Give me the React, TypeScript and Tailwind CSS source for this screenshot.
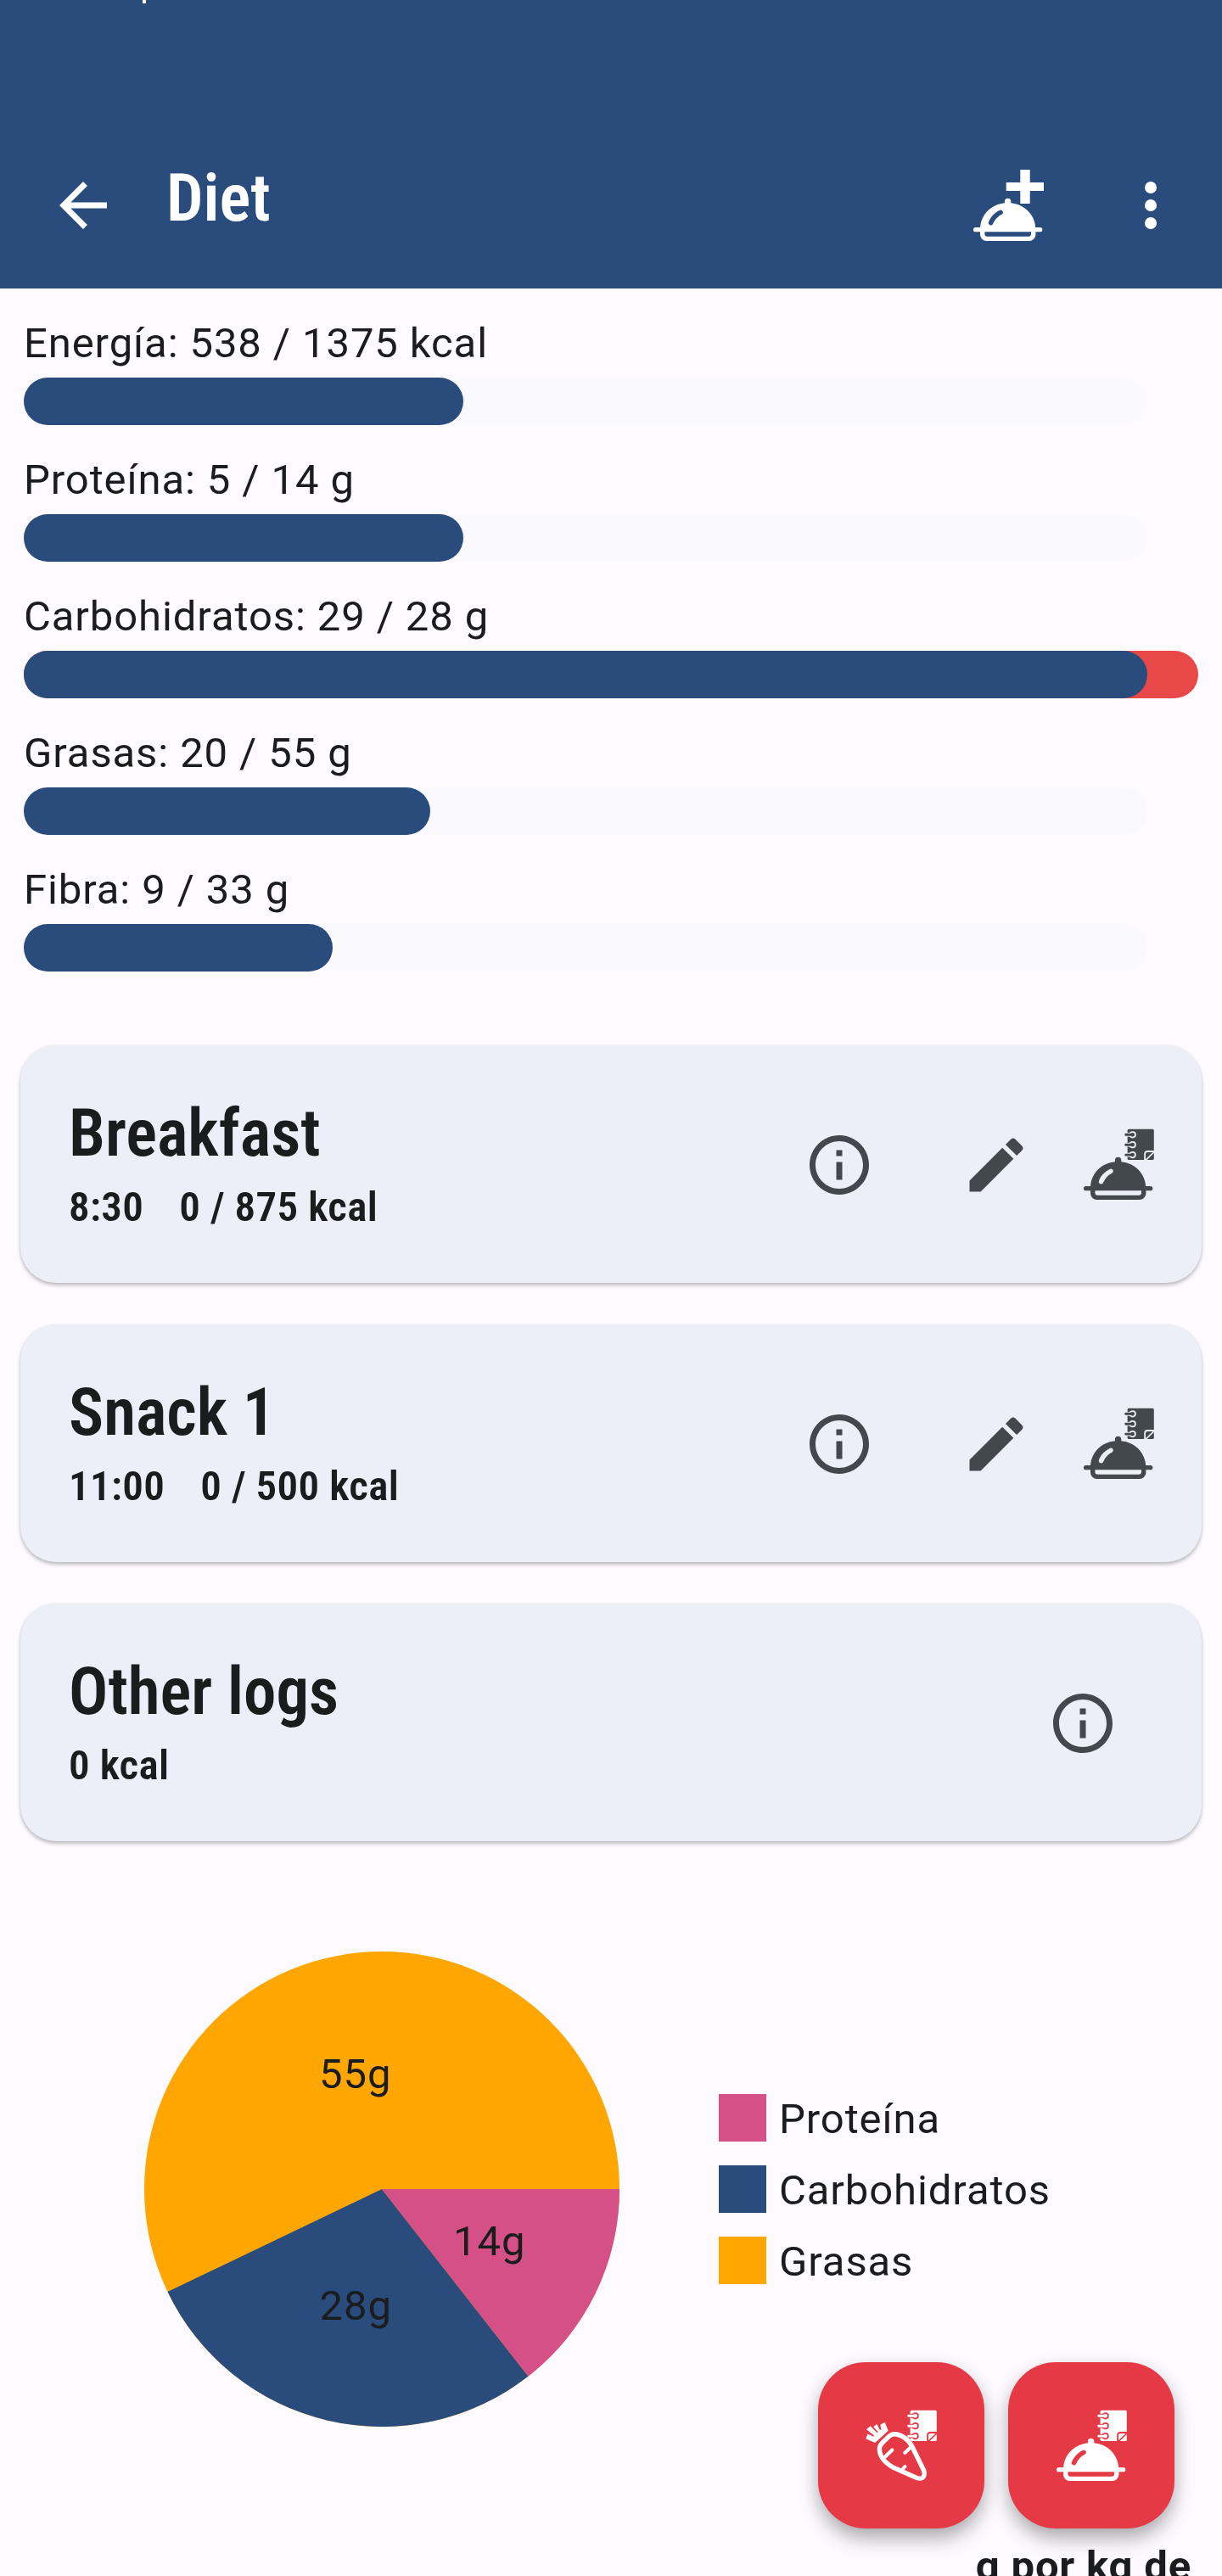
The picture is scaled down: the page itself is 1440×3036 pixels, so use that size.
import { useId } from 'react';

const bars = [
  { label: 'Energía: 538 / 1375 kcal', width: 518 },
  { label: 'Proteína: 5 / 14 g', width: 518 },
  { label: 'Carbohidratos: 29 / 28 g', width: 1324, over: true },
  { label: 'Grasas: 20 / 55 g', width: 479 },
  { label: 'Fibra: 9 / 33 g', width: 364 },
];

const legend = [
  { label: 'Proteína', color: 'bg-[#d45087]' },
  { label: 'Carbohidratos', color: 'bg-[#2a4c7d]' },
  { label: 'Grasas', color: 'bg-[#ffa600]' },
];

const CARROT =
  'M27.5 31.5Q31 28.5 34.5 28.7Q47.5 30 54.7 43L68.6 71.5Q70.3 77.5 67.5 80Q65 82 60.5 80.5L33 68.3Q16.4 59 16.4 46.5Q16.4 42.3 19.5 39.3Z';

function Dish() {
  return (
    <path
      fill="currentColor"
      fillRule="evenodd"
      d="M37.9 39.2V37.4A3.7 3.7 0 0 1 45.3 37.4V39.2C61.5 40.8 73.2 53 74.2 68H79.7A2.65 2.65 0 0 1 79.7 73.3H74.4V76.4A7.6 7.6 0 0 1 66.8 84H16.6A7.6 7.6 0 0 1 9 76.4V73.3H3.6A2.65 2.65 0 0 1 3.6 68H9.1C10 53 21.7 40.8 37.9 39.2ZM14.4 73.3V75.5A3.2 3.2 0 0 0 17.6 78.7H65.8A3.2 3.2 0 0 0 69 75.5V73.3ZM19 61.6A2.75 2.75 0 0 0 24.2 63.6C26.5 58.4 29.8 55.2 34.6 52.6A2.75 2.75 0 0 0 32.2 47.7C26.2 50.6 21.5 55 19 61.6Z"
    />
  );
}

function Notebook({ behindCarrot = false }: { behindCarrot?: boolean }) {
  const id = useId();
  const rings = [7.3, 19.2, 31.1];
  return (
    <g>
      <mask id={id} maskUnits="userSpaceOnUse" x="0" y="0" width="84" height="84">
        <rect width="84" height="84" fill="white" />
        {rings.map((y) => (
          <g key={y} fill="black">
            <rect x="48" y={y - 2.4} width="10" height="4.8" />
            <circle cx="58.7" cy={y} r="4.1" />
          </g>
        ))}
        <path d="M73.1 38V30.2Q73.1 27 76.3 27H84" fill="none" stroke="black" strokeWidth="1.8" />
        <path d="M74 37.4L83.6 28" stroke="black" strokeWidth="1.7" />
        {behindCarrot && <path d={CARROT} fill="black" stroke="black" strokeWidth="5.3" />}
      </mask>
      <rect x="52.6" y="0.8" width="31.2" height="36.2" rx="1.6" fill="currentColor" mask={`url(#${id})`} />
      {rings.map((y) => (
        <g key={y} fill="currentColor">
          <rect x="49.4" y={y - 1.45} width="9" height="2.9" rx="0.8" />
          <circle cx="58.6" cy={y} r="2.4" />
        </g>
      ))}
    </g>
  );
}

function DishLogIcon() {
  return (
    <svg viewBox="0 0 84 84" className="size-[84px] shrink-0">
      <Notebook />
      <Dish />
    </svg>
  );
}

function DishAddIcon() {
  return (
    <svg viewBox="0 0 84 84" className="size-[84px] shrink-0">
      <path fill="currentColor" d="M56.3 0H67.7V15H84V25H67.7V40H56.3V25H39.7V15H56.3Z" />
      <Dish />
    </svg>
  );
}

function CarrotLogIcon() {
  return (
    <svg viewBox="0 0 84 84" className="size-[84px] shrink-0">
      <Notebook behindCarrot />
      <path
        fill="currentColor"
        d="M11.3 39L.3 34.3L2.5 28.5L9.5 31.7L10.3 30.7L1 23.3L5.7 19.3L13.5 27.3L14.7 26.5L9.3 20L13.3 17L16.8 23.7L18.5 23.7L17.3 17.7L22.7 14.7L26.7 24.7Z"
      />
      <g fill="none" stroke="currentColor" strokeLinecap="round">
        <path d={CARROT} strokeWidth="5.4" />
        <path d="M31.3 47.4L22 56.5M46.3 50.8L54 43.5M46.4 67L43 71" strokeWidth="4.2" />
      </g>
    </svg>
  );
}

function InfoIcon() {
  return (
    <svg viewBox="0 0 24 24" fill="currentColor" className="mt-0.5 size-[84px] shrink-0">
      <path d="M11 7h2v2h-2zm0 4h2v6h-2zm1-9C6.48 2 2 6.48 2 12s4.48 10 10 10 10-4.48 10-10S17.52 2 12 2zm0 18c-4.41 0-8-3.59-8-8s3.59-8 8-8 8 3.59 8 8-3.59 8-8 8z" />
    </svg>
  );
}

function EditIcon() {
  return (
    <svg viewBox="0 0 24 24" fill="currentColor" className="mt-0.5 size-[84px] shrink-0">
      <path d="M3 17.25V21h3.75L17.81 9.94l-3.75-3.75L3 17.25zM20.71 7.04c.39-.39.39-1.02 0-1.41l-2.34-2.34c-.39-.39-1.02-.39-1.41 0l-1.83 1.83 3.75 3.75 1.83-1.83z" />
    </svg>
  );
}

function MealCard({ title, time, energy }: { title: string; time?: string; energy: string }) {
  return (
    <section className="flex h-[280px] items-center rounded-[42px] bg-[#eceff7] pl-[57px] pr-14 shadow-[0_3px_4px_rgba(0,0,0,0.24),0_0_3px_rgba(0,0,0,0.08)]">
      <div className="flex flex-1 flex-col gap-[3px] pt-px font-['Roboto_Condensed','Roboto',sans-serif] font-semibold">
        <h2 className="text-[77px] leading-[98px]">{title}</h2>
        <p className="flex gap-[42px] text-[49px] leading-[70px] tracking-[0.35px]">
          {time && <span>{time}</span>}
          <span>{energy}</span>
        </p>
      </div>
      {time ? (
        <div className="flex items-center text-[#43474e]">
          <InfoIcon />
          <div className="ml-[101px] mr-[60px]">
            <EditIcon />
          </div>
          <DishLogIcon />
        </div>
      ) : (
        <div className="mr-[42px] text-[#43474e]">
          <InfoIcon />
        </div>
      )}
    </section>
  );
}

function MacroPie() {
  return (
    <svg viewBox="-280 -280 560 560" className="size-[560px] shrink-0">
      <circle r="280" fill="#ffa600" />
      <path d="M0 0L172.5 220.6A280 280 0 0 1 -252.5 121Z" fill="#2a4c7d" />
      <path d="M0 0H280A280 280 0 0 1 172.5 220.6Z" fill="#d45087" />
      <g fill="#1a1c1e" className="text-[49px] tracking-[0.9px]">
        <text x="-74" y="-119">55g</text>
        <text x="84" y="78">14g</text>
        <text x="-73.5" y="154">28g</text>
      </g>
    </svg>
  );
}

export default function App() {
  return (
    <div className="relative h-[3036px] w-[1440px] overflow-hidden bg-[#fdfbff] font-['Roboto',sans-serif] text-[#1a1c1e]">
      <header className="flex h-[340px] flex-col bg-[#2a4c7d] text-white">
        <div className="ml-[168px] h-1 w-1 bg-white" />
        <div className="mt-[181px] flex items-start pl-14 pr-[42px]">
          <svg viewBox="0 0 24 24" fill="currentColor" className="mt-[15px] size-[84px]">
            <path d="M20 11H7.83l5.59-5.59L12 4l-8 8 8 8 1.41-1.41L7.83 13H20v-2z" />
          </svg>
          <h1 className="ml-14 flex-1 font-['Roboto_Condensed','Roboto',sans-serif] text-[77px] leading-[98px] font-semibold">
            Diet
          </h1>
          <div className="mt-[15px] flex gap-[84px]">
            <DishAddIcon />
            <svg viewBox="0 0 24 24" fill="currentColor" className="size-[84px]">
              <circle cx="12" cy="6" r="2" />
              <circle cx="12" cy="12" r="2" />
              <circle cx="12" cy="18" r="2" />
            </svg>
          </div>
        </div>
      </header>

      <main>
        <div className="flex flex-col gap-7 px-7 pt-[30px]">
          {bars.map((b) => (
            <div key={b.label}>
              <p className="text-[49px] leading-[70px] tracking-[0.9px]">{b.label}</p>
              <div className={`mt-[5px] mb-0.5 h-14 rounded-full ${b.over ? 'w-[1384px] bg-[#e84848]' : 'w-[1324px] bg-[#faf9fe]'}`}>
                <div className="h-14 rounded-full bg-[#2a4c7d]" style={{ width: b.width }} />
              </div>
            </div>
          ))}
        </div>

        <div className="mt-[85px] flex flex-col gap-[49px] px-6">
          <MealCard title="Breakfast" time="8:30" energy="0 / 875 kcal" />
          <MealCard title="Snack 1" time="11:00" energy="0 / 500 kcal" />
          <MealCard title="Other logs" energy="0 kcal" />
        </div>

        <div className="mt-[130px] flex items-center gap-[117px] pl-[170px]">
          <MacroPie />
          <ul className="flex flex-col gap-7">
            {legend.map((l) => (
              <li key={l.label} className="flex h-14 items-start gap-[15px]">
                <span className={`size-14 ${l.color}`} />
                <span className="text-[49px] leading-[60px] tracking-[0.9px]">{l.label}</span>
              </li>
            ))}
          </ul>
        </div>

        <div className="mt-[130px] flex justify-end pr-[36px]">
          <span className="text-[49px] leading-[70px] font-bold tracking-[0.8px]">g por kg de</span>
        </div>
      </main>

      <div className="absolute top-[2784px] right-14 flex gap-7 text-white">
        <button className="flex size-[196px] items-center justify-center rounded-[56px] bg-[#e63946] shadow-[0_14px_24px_-2px_rgba(0,0,0,0.28),0_4px_20px_rgba(0,0,0,0.10)]">
          <CarrotLogIcon />
        </button>
        <button className="flex size-[196px] items-center justify-center rounded-[56px] bg-[#e63946] shadow-[0_14px_24px_-2px_rgba(0,0,0,0.28),0_4px_20px_rgba(0,0,0,0.10)]">
          <DishLogIcon />
        </button>
      </div>
    </div>
  );
}
